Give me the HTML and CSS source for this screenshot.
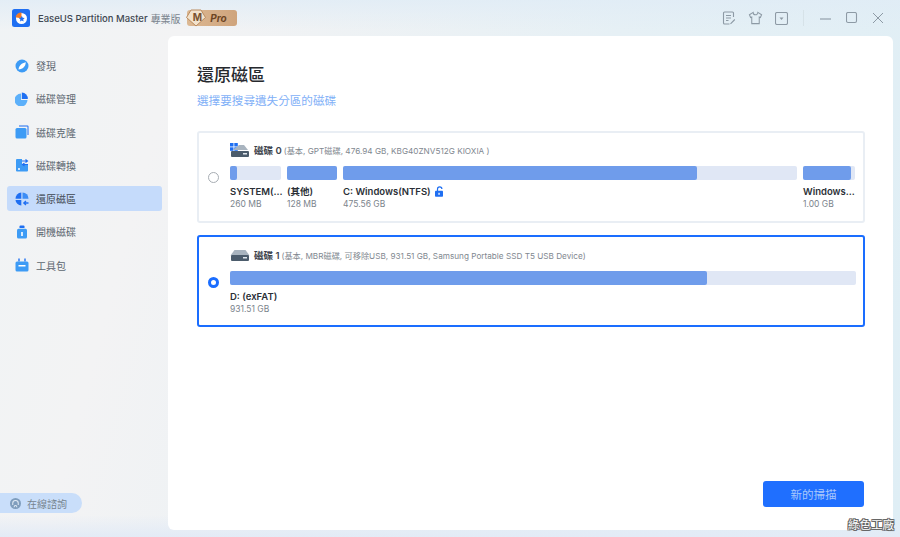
FILE: index.html
```html
<!DOCTYPE html>
<html lang="zh-Hant">

<head>
  <meta charset="UTF-8">
  <meta name="viewport" content="width=device-width, initial-scale=1.0">
  <title>EaseUS Partition Master</title>

  <link rel="stylesheet" href="styles.css">
</head>

<body>
  <header class="titlebar">
    <div class="brand">
      <svg class="app-logo" viewBox="0 0 18 18" width="18" height="18">
        <rect width="18" height="18" rx="2.5" fill="#1f6ff2" />
        <circle cx="9.5" cy="9.5" r="5.5" fill="#fff" />
        <path d="M9.5 9.500V3.400A6 6 0 0 0 3.600 8.200Z" fill="#f07a28" />
        <path d="M9.800 6.800l.9 1.900 2 .3-1.500 1.400.4 2-1.800-1-1.800 1 .4-2L6.900 9l2-.3Z" fill="#1f6ff2" />
      </svg>
      <span class="app-name">EaseUS Partition Master</span>
      <span class="app-edition">專業版</span>
      <span class="pro-badge">
        <svg class="pro-gem" viewBox="0 0 20 18" width="20" height="18">
          <path d="M5 1h10l4.500 7.500L10 17 .5 8.500Z" fill="#f2e2cc" stroke="#b98a5e" />
        </svg>
        <span class="pro-m">M</span>
        <span class="pro-text">Pro</span>
      </span>
    </div>
    <div class="window-tools">
      <svg class="tool-note" viewBox="0 0 14 14" width="14" height="14" fill="none" stroke="#8d9aa5" stroke-width="1.100">
        <path d="M11.500 6V2a1 1 0 0 0-1-1h-8a1 1 0 0 0-1 1v10a1 1 0 0 0 1 1h5" />
        <path d="M4 4.500h5M4 7h5M4 9.500h2.500M8.500 12.800l4.300-4.300" />
      </svg>
      <svg class="tool-shirt" viewBox="0 0 16 14" width="15" height="14" fill="none" stroke="#8d9aa5" stroke-width="1.100">
        <path d="M5.500 1 1.500 3.500 2.800 6.500 4 6v7h8V6l1.200.5 1.300-3L10.500 1a2.500 2.500 0 0 1-5 0Z" />
      </svg>
      <svg class="tool-box" viewBox="0 0 13 13" width="13" height="13" fill="none" stroke="#8d9aa5" stroke-width="1.100">
        <rect x=".5" y=".5" width="12" height="12" rx="1.500" />
        <path d="M4.500 5.500h4L6.500 8Z" fill="#8d9aa5" stroke="none" />
      </svg>
      <span class="tool-divider"></span>
      <svg class="win-min" viewBox="0 0 12 12" width="12" height="12" stroke="#8d9aa5" stroke-width="1.100">
        <path d="M0 7h11" />
      </svg>
      <svg class="win-max" viewBox="0 0 12 12" width="12" height="12" fill="none" stroke="#8d9aa5" stroke-width="1.100">
        <rect x=".5" y=".5" width="10" height="10" rx="1.500" />
      </svg>
      <svg class="win-close" viewBox="0 0 12 12" width="12" height="12" stroke="#8d9aa5" stroke-width="1">
        <path d="M1 1l10 10M11 1 1 11" />
      </svg>
    </div>
  </header>

  <div class="app-body">
    <aside class="sidebar">
      <nav class="nav-list">
        <a class="nav-item">
          <svg viewBox="0 0 14 14" width="14" height="14">
            <circle cx="7" cy="7" r="6.500" fill="#3d9bf5" />
            <path d="M3.500 10.500C4 6.500 6.500 4 10.800 3.200 10.500 7.500 8 10 3.500 10.500Z" fill="#fff" />
          </svg>
          <span>發現</span>
        </a>
        <a class="nav-item">
          <svg viewBox="0 0 14 14" width="14" height="14">
            <path d="M6 1.500v6.600h6.500A6.500 6.500 0 1 1 6 1.500Z" fill="#5cb0fa" />
            <path d="M6.800.5a6 6 0 0 1 6 6.500H6.800Z" fill="#1f6ff2" />
          </svg>
          <span>磁碟管理</span>
        </a>
        <a class="nav-item">
          <svg viewBox="0 0 14 14" width="14" height="14">
            <path d="M4 .5h8.500a1 1 0 0 1 1 1V10h-1V1.500H4Z" fill="#1f6ff2" />
            <rect x=".5" y="3" width="11" height="10.500" rx="1.500" fill="#3d9bf5" />
          </svg>
          <span>磁碟克隆</span>
        </a>
        <a class="nav-item">
          <svg viewBox="0 0 14 14" width="14" height="14">
            <path d="M2 1h5v5h6v6.500a1 1 0 0 1-1 1H2a1 1 0 0 1-1-1V2a1 1 0 0 1 1-1Z" fill="#3d9bf5" />
            <path d="M7 3h5M10.500 1.500 12.500 3l-2 1.500M13 6.500H8M9.500 5 7.500 6.500l2 1.500" fill="none" stroke="#1f6ff2" stroke-width="1.100" />
            <circle cx="4" cy="11" r="1" fill="#fff" />
          </svg>
          <span>磁碟轉換</span>
        </a>
        <a class="nav-item nav-item-active">
          <svg viewBox="0 0 14 14" width="14" height="14">
            <path d="M6.300.5v6.200H.5A6 6 0 0 1 6.300.5Z" fill="#1f6ff2" />
            <path d="M7.500.5a6 6 0 0 1 6 6.200h-6Z" fill="#3d8df5" />
            <path d="M6.300 7.900v5.600A6 6 0 0 1 .5 7.900Z" fill="#1f6ff2" />
            <path d="M13.500 11H9.500M11 9 8.800 11 11 13" fill="none" stroke="#1f6ff2" stroke-width="1.300" />
          </svg>
          <span>還原磁區</span>
        </a>
        <a class="nav-item">
          <svg viewBox="0 0 14 14" width="14" height="14">
            <path d="M4.500 3V1.500a1 1 0 0 1 1-1h3a1 1 0 0 1 1 1V3Z" fill="#1f6ff2" />
            <rect x="2" y="3.800" width="10" height="9.700" rx="1.500" fill="#3d9bf5" />
            <rect x="6.200" y="7" width="1.600" height="4" fill="#fff" />
          </svg>
          <span>開機磁碟</span>
        </a>
        <a class="nav-item">
          <svg viewBox="0 0 14 14" width="14" height="14">
            <path d="M4 .5v3M10 .5v3" stroke="#1f6ff2" stroke-width="1.400" />
            <rect x=".5" y="3.500" width="13" height="10" rx="1.500" fill="#3d9bf5" />
            <rect x="3.500" y="7" width="7" height="1.500" fill="#fff" />
          </svg>
          <span>工具包</span>
        </a>
      </nav>
      <div class="help-pill">
        <svg viewBox="0 0 12 12" width="11" height="11">
          <circle cx="6" cy="6" r="6" fill="#7f9dbd" />
          <path d="M3 7.500V5.800a3 3 0 0 1 6 0v1.700M4.500 10c0-2.500 3-2.500 3 0" fill="none" stroke="#e3ecf7" stroke-width="1.100" />
        </svg>
        <span>在線諮詢</span>
      </div>
    </aside>

    <main class="panel">
      <h1 class="panel-title">還原磁區</h1>
      <p class="panel-sub">選擇要搜尋遺失分區的磁碟</p>

      <section class="disk-card">
        <span class="radio"></span>
        <div class="disk-info">
          <div class="disk-head">
            <svg class="disk-icon" viewBox="0 0 20 14" width="20" height="14">
              <rect x="0" y="0" width="3.500" height="3.500" fill="#1f6ff2" />
              <rect x="4.300" y="0" width="3.500" height="3.500" fill="#1f6ff2" />
              <rect x="0" y="4.300" width="3.500" height="3.500" fill="#1f6ff2" />
              <rect x="4.300" y="4.300" width="3.500" height="3.500" fill="#1f6ff2" />
              <path d="M9 2h5l4 5H3Z" fill="#a9b4bf" />
              <rect x="1" y="8" width="18" height="6" rx="1" fill="#4c5c6c" />
              <rect x="13" y="10" width="4" height="1.500" fill="#dfe6ec" />
            </svg>
            <span class="disk-name">磁碟 0</span>
            <span class="disk-meta">(基本, GPT磁碟, 476.94 GB, KBG40ZNV512G KIOXIA )</span>
          </div>
          <div class="part-row">
            <div class="part part-system">
              <div class="bar"><div class="bar-fill" style="width: 13%"></div></div>
              <div class="part-label">SYSTEM(...</div>
              <div class="part-size">260 MB</div>
            </div>
            <div class="part part-other">
              <div class="bar"><div class="bar-fill" style="width: 100%"></div></div>
              <div class="part-label">(其他)</div>
              <div class="part-size">128 MB</div>
            </div>
            <div class="part part-main">
              <div class="bar"><div class="bar-fill" style="width: 78%"></div></div>
              <div class="part-label">C: Windows(NTFS)
                <svg class="lock" viewBox="0 0 10 11" width="10" height="11">
                  <path d="M2.500 5V3a2.200 2.200 0 0 1 4.400 0" fill="none" stroke="#1f6ff2" stroke-width="1.200" />
                  <rect x="0" y="4.800" width="8" height="6" rx=".8" fill="#1f6ff2" />
                  <rect x="3.400" y="6.800" width="1.300" height="2" fill="#fff" />
                </svg>
              </div>
              <div class="part-size">475.56 GB</div>
            </div>
            <div class="part part-win">
              <div class="bar"><div class="bar-fill" style="width: 92%"></div></div>
              <div class="part-label">Windows...</div>
              <div class="part-size">1.00 GB</div>
            </div>
          </div>
        </div>
      </section>

      <section class="disk-card disk-card-active">
        <span class="radio radio-on"></span>
        <div class="disk-info">
          <div class="disk-head">
            <svg class="disk-icon" viewBox="0 0 20 14" width="20" height="14">
              <path d="M4.500 2h11l4 5.500H.5Z" fill="#a9b4bf" />
              <rect x="1" y="7" width="18" height="6" rx="1" fill="#4c5c6c" />
              <rect x="13" y="9" width="4" height="1.500" fill="#dfe6ec" />
            </svg>
            <span class="disk-name">磁碟 1</span>
            <span class="disk-meta">(基本, MBR磁碟, 可移除USB, 931.51 GB, Samsung Portable SSD T5 USB Device)</span>
          </div>
          <div class="part-row">
            <div class="part part-full">
              <div class="bar"><div class="bar-fill" style="width: 76.200%"></div></div>
              <div class="part-label">D: (exFAT)</div>
              <div class="part-size">931.51 GB</div>
            </div>
          </div>
        </div>
      </section>

      <div class="panel-foot">
        <button class="scan-btn" type="button">新的掃描</button>
      </div>
    </main>
  </div>

  <div class="watermark">綠色工廠</div>
</body>

</html>
```

FILE: styles.css
```css
* {
  box-sizing: border-box;
}

html,
body {
  height: 537px;
  margin: 0;
  overflow: hidden;
}

body {
  position: relative;
  font-family: Inter, "Noto Sans CJK TC", sans-serif;
  color: #2b2f36;
  background:
    linear-gradient(180deg, rgba(224, 236, 246, .8) 0, rgba(224, 236, 246, 0) 30px),
    linear-gradient(0deg, #e3ebf6 0, rgba(227, 235, 246, 0) 22px),
    linear-gradient(105deg, #f0f3f5 0%, #f3f3f4 18%, #e6f0f5 60%, #dfeef5 100%);
}

.titlebar {
  display: flex;
  justify-content: space-between;
  align-items: center;
  height: 36px;
  padding: 0 16px 0 12px;
}

.brand {
  display: flex;
  align-items: center;
}

.app-logo {
  margin-right: 8px;
}

.app-name {
  font-size: 9.500px;
  font-weight: 500;
  color: #3f4852;
}

.app-edition {
  margin-left: 3px;
  font-size: 10px;
  color: #79838d;
}

.pro-badge {
  position: relative;
  display: flex;
  align-items: center;
  justify-content: flex-end;
  width: 50px;
  height: 16px;
  margin-left: 6px;
  padding-right: 10px;
  border-radius: 3px;
  background: linear-gradient(90deg, #dcb893, #cfa47c);
}

.pro-gem {
  position: absolute;
  left: -1px;
  top: -1px;
}

.pro-m {
  position: absolute;
  left: 6px;
  top: 1px;
  font-size: 10px;
  font-weight: 700;
  color: #7a5230;
}

.pro-text {
  font-size: 10px;
  font-weight: 700;
  font-style: italic;
  color: #6d4524;
}

.window-tools {
  display: flex;
  align-items: center;
}

.tool-shirt {
  margin-left: 12px;
}

.tool-box {
  margin-left: 12px;
}

.tool-divider {
  width: 1px;
  height: 16px;
  margin-left: 15px;
  background: #d6e2e8;
}

.win-min {
  margin-left: 16px;
}

.win-max,
.win-close {
  margin-left: 14px;
}

.app-body {
  display: flex;
  height: 494px;
}

.sidebar {
  display: flex;
  flex-direction: column;
  justify-content: space-between;
  width: 168px;
  padding-bottom: 17px;
}

.nav-list {
  display: flex;
  flex-direction: column;
  gap: 8.300px;
  margin-top: 17px;
  padding-left: 7px;
}

.nav-item {
  display: flex;
  align-items: center;
  gap: 7px;
  width: 155px;
  height: 25px;
  padding-left: 8px;
  border-radius: 3px;
  font-size: 10px;
  color: #5c6670;
}

.nav-item-active {
  background: #c5dbfb;
  color: #3d4650;
}

.help-pill {
  display: flex;
  align-items: center;
  gap: 6px;
  width: 82px;
  height: 20px;
  padding-left: 10px;
  border-radius: 0 10px 10px 0;
  background: #c9defa;
  font-size: 10px;
  color: #77848f;
}

.panel {
  display: flex;
  flex-direction: column;
  width: 725px;
  height: 494px;
  padding: 29px 29px 23px;
  border-radius: 6px;
  background: #fff;
}

.panel-title {
  margin: 0;
  font-size: 17px;
  line-height: 20px;
  font-weight: 500;
  color: #26292e;
}

.panel-sub {
  margin: 8px 0 0;
  font-size: 11.600px;
  line-height: 16px;
  color: #7fb0f7;
}

.disk-card {
  display: flex;
  align-items: center;
  width: 668px;
  height: 92px;
  margin-top: 22px;
  padding-left: 9px;
  border: 2px solid #e9eef4;
  border-radius: 3px;
}

.disk-card-active {
  margin-top: 12px;
  padding-top: 2px;
  border-color: #1a6dff;
}

.radio {
  flex: none;
  width: 11px;
  height: 11px;
  margin-right: 11px;
  border: 1px solid #a7adb3;
  border-radius: 50%;
  background: #fff;
}

.radio-on {
  border: 3px solid #1a6dff;
}

.disk-info {
  flex: 1;
  min-width: 0;
  padding-right: 7px;
}

.disk-head {
  display: flex;
  align-items: center;
  height: 14px;
}

.disk-icon {
  margin-right: 4px;
}

.disk-name {
  font-size: 9.500px;
  font-weight: 600;
  color: #3c434b;
}

.disk-meta {
  margin-left: 2px;
  font-size: 8.200px;
  color: #7f8890;
}

.part-row {
  display: flex;
  gap: 6px;
  margin-top: 9px;
}

.part {
  flex: none;
  min-width: 0;
}

.part-system {
  width: 51px;
}

.part-other {
  width: 50px;
}

.part-main {
  width: 454px;
}

.part-win {
  width: 52px;
}

.part-full {
  width: 626px;
}

.bar {
  height: 14px;
  border-radius: 2px;
  background: #e0e7f5;
}

.bar-fill {
  height: 100%;
  border-radius: 2px;
  background: #6f9ceb;
}

.part-label {
  display: flex;
  align-items: center;
  gap: 4px;
  margin-top: 4px;
  height: 14px;
  font-size: 9.500px;
  font-weight: 600;
  white-space: nowrap;
  color: #2b2f36;
}

.part-size {
  font-size: 8.500px;
  line-height: 13px;
  color: #7b848c;
}

.panel-foot {
  display: flex;
  justify-content: flex-end;
  margin-top: auto;
}

.scan-btn {
  width: 101px;
  height: 26px;
  border: none;
  border-radius: 3px;
  background: #1f6fff;
  font-family: inherit;
  font-size: 11.500px;
  color: #a9c8fb;
}

.watermark {
  position: absolute;
  right: 6px;
  bottom: 5px;
  font-size: 11.500px;
  line-height: 13px;
  color: #fff;
  text-shadow: 1px 0 #666, -1px 0 #666, 0 1px #666, 0 -1px #666, 1px 1px #666, -1px -1px #666, 1px -1px #666, -1px 1px #666;
}
```
